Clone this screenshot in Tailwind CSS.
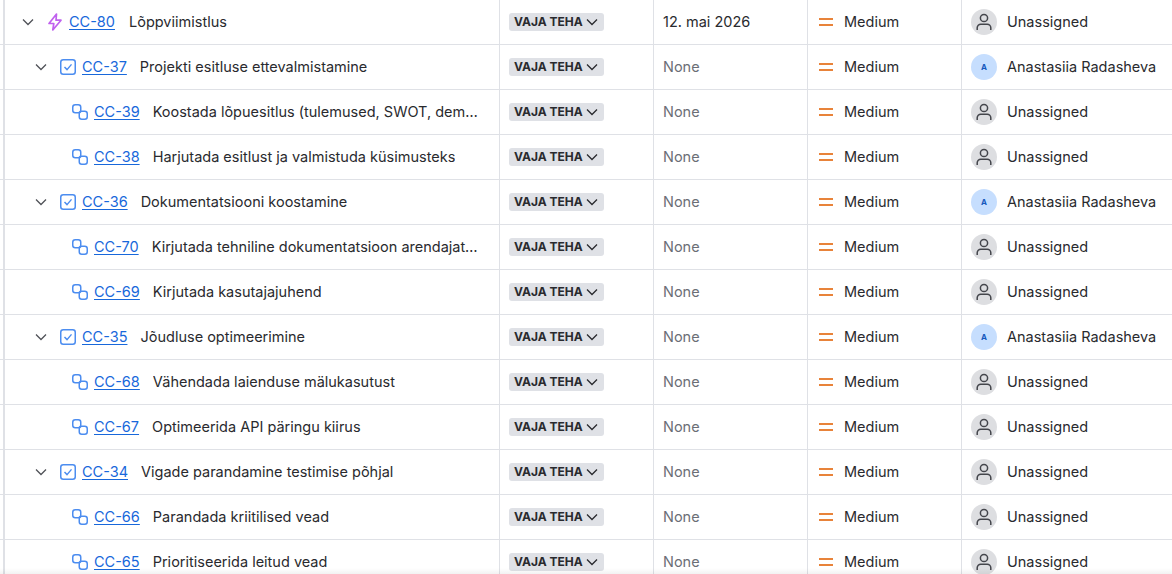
<!doctype html>
<html><head><meta charset="utf-8"><script src="https://cdn.jsdelivr.net/npm/@tailwindcss/browser@4"></script></head>
<body class="bg-white">
<svg class="hidden" width="0" height="0">
<defs>
<symbol id="chev" viewBox="0 0 12 12"><path d="M1 3.5 6 8.5 11 3.5" fill="none" stroke="currentColor" stroke-width="1.3"/></symbol>
<symbol id="bolt" viewBox="0 0 16 18"><path d="M9.5 1 2 10.5h4.8L5.8 17 14 7.2H9z" fill="none" stroke="#c061ee" stroke-width="1.7" stroke-linejoin="round"/></symbol>
<symbol id="task" viewBox="0 0 16 16"><rect x=".75" y=".75" width="14.5" height="14.5" rx="2.5" fill="none" stroke="#4c8df0" stroke-width="1.5"/><path d="M4.5 8 7 10.6 11.5 5.4" fill="none" stroke="#4c8df0" stroke-width="1.4"/></symbol>
<symbol id="sub" viewBox="0 0 16 16"><rect x=".75" y=".75" width="8" height="8" rx="2.5" fill="none" stroke="#4c8df0" stroke-width="1.5"/><rect x="7.25" y="7.25" width="8" height="8" rx="2.5" fill="none" stroke="#4c8df0" stroke-width="1.5"/></symbol>
<symbol id="prio" viewBox="0 0 14 8"><path d="M0 1h14M0 7h14" stroke="#e8833a" stroke-width="2"/></symbol>
<symbol id="user" viewBox="0 0 16 18"><circle cx="8" cy="5" r="3.6" fill="none" stroke="#44464c" stroke-width="1.5"/><path d="M1.2 17v-2.2a3.6 3.6 0 0 1 3.6-3.6h6.4a3.6 3.6 0 0 1 3.6 3.6V17" fill="none" stroke="#44464c" stroke-width="1.5"/></symbol>
</defs>
</svg>
<main class="relative h-[574px] w-[1172px] overflow-hidden font-['Inter',sans-serif] text-[14.5px] text-[#292a2e]">

<div class="flex h-[45px] border-b border-[#dfe1e6]"><div class="w-[5px] border-r-2 border-[#dfe1e6]"></div><div class="flex w-[495px] min-w-0 items-center border-r border-[#dfe1e6] pl-[17px] pr-[21px]"><svg class="mr-[13px] h-3 w-3 shrink-0 text-[#505258]"><use href="#chev"/></svg><svg class="mr-[6px] h-[18px] w-[16px] shrink-0"><use href="#bolt"/></svg><a class="mr-[14px] shrink-0 text-[#1868db] underline underline-offset-2">CC-80</a><span class="truncate">Lõppviimistlus</span></div><div class="flex w-[154px] items-center border-r border-[#dfe1e6] pl-[9px]"><span class="flex h-[18px] w-[95px] items-center rounded-[3px] bg-[#dfe1e6] pl-[5px] text-[12px] font-bold">VAJA TEHA<svg class="ml-[3px] h-3 w-3 text-[#292a2e]"><use href="#chev"/></svg></span></div><div class="flex w-[154px] items-center border-r border-[#dfe1e6] pl-[9px]">12. mai 2026</div><div class="flex w-[154px] items-center border-r border-[#dfe1e6] pl-[11px]"><svg class="mr-[11px] h-2 w-[14px]"><use href="#prio"/></svg>Medium</div><div class="flex flex-1 items-center whitespace-nowrap pl-[9px]"><span class="mr-[10px] flex h-[26px] w-[26px] shrink-0 items-center justify-center rounded-full bg-[#dddee1]"><svg class="h-[18px] w-4"><use href="#user"/></svg></span>Unassigned</div></div>

<div class="flex h-[45px] border-b border-[#dfe1e6]"><div class="w-[5px] border-r-2 border-[#dfe1e6]"></div><div class="flex w-[495px] min-w-0 items-center border-r border-[#dfe1e6] pl-[30px] pr-[21px]"><svg class="mr-[13px] h-3 w-3 shrink-0 text-[#505258]"><use href="#chev"/></svg><svg class="mr-[6px] h-4 w-4 shrink-0"><use href="#task"/></svg><a class="mr-[13px] shrink-0 text-[#1868db] underline underline-offset-2">CC-37</a><span class="truncate">Projekti esitluse ettevalmistamine</span></div><div class="flex w-[154px] items-center border-r border-[#dfe1e6] pl-[9px]"><span class="flex h-[18px] w-[95px] items-center rounded-[3px] bg-[#dfe1e6] pl-[5px] text-[12px] font-bold">VAJA TEHA<svg class="ml-[3px] h-3 w-3 text-[#292a2e]"><use href="#chev"/></svg></span></div><div class="flex w-[154px] items-center border-r border-[#dfe1e6] pl-[9px] text-[#6b6e76]">None</div><div class="flex w-[154px] items-center border-r border-[#dfe1e6] pl-[11px]"><svg class="mr-[11px] h-2 w-[14px]"><use href="#prio"/></svg>Medium</div><div class="flex flex-1 items-center whitespace-nowrap pl-[9px]"><span class="mr-[10px] flex h-[26px] w-[26px] shrink-0 items-center justify-center rounded-full bg-[#c6defe] text-[8px] font-bold text-[#1558bc]">A</span>Anastasiia Radasheva</div></div>

<div class="flex h-[45px] border-b border-[#dfe1e6]"><div class="w-[5px] border-r-2 border-[#dfe1e6]"></div><div class="flex w-[495px] min-w-0 items-center border-r border-[#dfe1e6] pl-[67px] pr-[21px]"><svg class="mr-[6px] h-4 w-4 shrink-0"><use href="#sub"/></svg><a class="mr-[13px] shrink-0 text-[#1868db] underline underline-offset-2">CC-39</a><span class="truncate">Koostada lõpuesitlus (tulemused, SWOT, demo ja järeldused)</span></div><div class="flex w-[154px] items-center border-r border-[#dfe1e6] pl-[9px]"><span class="flex h-[18px] w-[95px] items-center rounded-[3px] bg-[#dfe1e6] pl-[5px] text-[12px] font-bold">VAJA TEHA<svg class="ml-[3px] h-3 w-3 text-[#292a2e]"><use href="#chev"/></svg></span></div><div class="flex w-[154px] items-center border-r border-[#dfe1e6] pl-[9px] text-[#6b6e76]">None</div><div class="flex w-[154px] items-center border-r border-[#dfe1e6] pl-[11px]"><svg class="mr-[11px] h-2 w-[14px]"><use href="#prio"/></svg>Medium</div><div class="flex flex-1 items-center whitespace-nowrap pl-[9px]"><span class="mr-[10px] flex h-[26px] w-[26px] shrink-0 items-center justify-center rounded-full bg-[#dddee1]"><svg class="h-[18px] w-4"><use href="#user"/></svg></span>Unassigned</div></div>

<div class="flex h-[45px] border-b border-[#dfe1e6]"><div class="w-[5px] border-r-2 border-[#dfe1e6]"></div><div class="flex w-[495px] min-w-0 items-center border-r border-[#dfe1e6] pl-[67px] pr-[21px]"><svg class="mr-[6px] h-4 w-4 shrink-0"><use href="#sub"/></svg><a class="mr-[13px] shrink-0 text-[#1868db] underline underline-offset-2">CC-38</a><span class="truncate">Harjutada esitlust ja valmistuda küsimusteks</span></div><div class="flex w-[154px] items-center border-r border-[#dfe1e6] pl-[9px]"><span class="flex h-[18px] w-[95px] items-center rounded-[3px] bg-[#dfe1e6] pl-[5px] text-[12px] font-bold">VAJA TEHA<svg class="ml-[3px] h-3 w-3 text-[#292a2e]"><use href="#chev"/></svg></span></div><div class="flex w-[154px] items-center border-r border-[#dfe1e6] pl-[9px] text-[#6b6e76]">None</div><div class="flex w-[154px] items-center border-r border-[#dfe1e6] pl-[11px]"><svg class="mr-[11px] h-2 w-[14px]"><use href="#prio"/></svg>Medium</div><div class="flex flex-1 items-center whitespace-nowrap pl-[9px]"><span class="mr-[10px] flex h-[26px] w-[26px] shrink-0 items-center justify-center rounded-full bg-[#dddee1]"><svg class="h-[18px] w-4"><use href="#user"/></svg></span>Unassigned</div></div>

<div class="flex h-[45px] border-b border-[#dfe1e6]"><div class="w-[5px] border-r-2 border-[#dfe1e6]"></div><div class="flex w-[495px] min-w-0 items-center border-r border-[#dfe1e6] pl-[30px] pr-[21px]"><svg class="mr-[13px] h-3 w-3 shrink-0 text-[#505258]"><use href="#chev"/></svg><svg class="mr-[6px] h-4 w-4 shrink-0"><use href="#task"/></svg><a class="mr-[13px] shrink-0 text-[#1868db] underline underline-offset-2">CC-36</a><span class="truncate">Dokumentatsiooni koostamine</span></div><div class="flex w-[154px] items-center border-r border-[#dfe1e6] pl-[9px]"><span class="flex h-[18px] w-[95px] items-center rounded-[3px] bg-[#dfe1e6] pl-[5px] text-[12px] font-bold">VAJA TEHA<svg class="ml-[3px] h-3 w-3 text-[#292a2e]"><use href="#chev"/></svg></span></div><div class="flex w-[154px] items-center border-r border-[#dfe1e6] pl-[9px] text-[#6b6e76]">None</div><div class="flex w-[154px] items-center border-r border-[#dfe1e6] pl-[11px]"><svg class="mr-[11px] h-2 w-[14px]"><use href="#prio"/></svg>Medium</div><div class="flex flex-1 items-center whitespace-nowrap pl-[9px]"><span class="mr-[10px] flex h-[26px] w-[26px] shrink-0 items-center justify-center rounded-full bg-[#c6defe] text-[8px] font-bold text-[#1558bc]">A</span>Anastasiia Radasheva</div></div>

<div class="flex h-[45px] border-b border-[#dfe1e6]"><div class="w-[5px] border-r-2 border-[#dfe1e6]"></div><div class="flex w-[495px] min-w-0 items-center border-r border-[#dfe1e6] pl-[67px] pr-[21px]"><svg class="mr-[6px] h-4 w-4 shrink-0"><use href="#sub"/></svg><a class="mr-[13px] shrink-0 text-[#1868db] underline underline-offset-2">CC-70</a><span class="truncate">Kirjutada tehniline dokumentatsioon arendajatele ja kasutajatele</span></div><div class="flex w-[154px] items-center border-r border-[#dfe1e6] pl-[9px]"><span class="flex h-[18px] w-[95px] items-center rounded-[3px] bg-[#dfe1e6] pl-[5px] text-[12px] font-bold">VAJA TEHA<svg class="ml-[3px] h-3 w-3 text-[#292a2e]"><use href="#chev"/></svg></span></div><div class="flex w-[154px] items-center border-r border-[#dfe1e6] pl-[9px] text-[#6b6e76]">None</div><div class="flex w-[154px] items-center border-r border-[#dfe1e6] pl-[11px]"><svg class="mr-[11px] h-2 w-[14px]"><use href="#prio"/></svg>Medium</div><div class="flex flex-1 items-center whitespace-nowrap pl-[9px]"><span class="mr-[10px] flex h-[26px] w-[26px] shrink-0 items-center justify-center rounded-full bg-[#dddee1]"><svg class="h-[18px] w-4"><use href="#user"/></svg></span>Unassigned</div></div>

<div class="flex h-[45px] border-b border-[#dfe1e6]"><div class="w-[5px] border-r-2 border-[#dfe1e6]"></div><div class="flex w-[495px] min-w-0 items-center border-r border-[#dfe1e6] pl-[67px] pr-[21px]"><svg class="mr-[6px] h-4 w-4 shrink-0"><use href="#sub"/></svg><a class="mr-[13px] shrink-0 text-[#1868db] underline underline-offset-2">CC-69</a><span class="truncate">Kirjutada kasutajajuhend</span></div><div class="flex w-[154px] items-center border-r border-[#dfe1e6] pl-[9px]"><span class="flex h-[18px] w-[95px] items-center rounded-[3px] bg-[#dfe1e6] pl-[5px] text-[12px] font-bold">VAJA TEHA<svg class="ml-[3px] h-3 w-3 text-[#292a2e]"><use href="#chev"/></svg></span></div><div class="flex w-[154px] items-center border-r border-[#dfe1e6] pl-[9px] text-[#6b6e76]">None</div><div class="flex w-[154px] items-center border-r border-[#dfe1e6] pl-[11px]"><svg class="mr-[11px] h-2 w-[14px]"><use href="#prio"/></svg>Medium</div><div class="flex flex-1 items-center whitespace-nowrap pl-[9px]"><span class="mr-[10px] flex h-[26px] w-[26px] shrink-0 items-center justify-center rounded-full bg-[#dddee1]"><svg class="h-[18px] w-4"><use href="#user"/></svg></span>Unassigned</div></div>

<div class="flex h-[45px] border-b border-[#dfe1e6]"><div class="w-[5px] border-r-2 border-[#dfe1e6]"></div><div class="flex w-[495px] min-w-0 items-center border-r border-[#dfe1e6] pl-[30px] pr-[21px]"><svg class="mr-[13px] h-3 w-3 shrink-0 text-[#505258]"><use href="#chev"/></svg><svg class="mr-[6px] h-4 w-4 shrink-0"><use href="#task"/></svg><a class="mr-[13px] shrink-0 text-[#1868db] underline underline-offset-2">CC-35</a><span class="truncate">Jõudluse optimeerimine</span></div><div class="flex w-[154px] items-center border-r border-[#dfe1e6] pl-[9px]"><span class="flex h-[18px] w-[95px] items-center rounded-[3px] bg-[#dfe1e6] pl-[5px] text-[12px] font-bold">VAJA TEHA<svg class="ml-[3px] h-3 w-3 text-[#292a2e]"><use href="#chev"/></svg></span></div><div class="flex w-[154px] items-center border-r border-[#dfe1e6] pl-[9px] text-[#6b6e76]">None</div><div class="flex w-[154px] items-center border-r border-[#dfe1e6] pl-[11px]"><svg class="mr-[11px] h-2 w-[14px]"><use href="#prio"/></svg>Medium</div><div class="flex flex-1 items-center whitespace-nowrap pl-[9px]"><span class="mr-[10px] flex h-[26px] w-[26px] shrink-0 items-center justify-center rounded-full bg-[#c6defe] text-[8px] font-bold text-[#1558bc]">A</span>Anastasiia Radasheva</div></div>

<div class="flex h-[45px] border-b border-[#dfe1e6]"><div class="w-[5px] border-r-2 border-[#dfe1e6]"></div><div class="flex w-[495px] min-w-0 items-center border-r border-[#dfe1e6] pl-[67px] pr-[21px]"><svg class="mr-[6px] h-4 w-4 shrink-0"><use href="#sub"/></svg><a class="mr-[13px] shrink-0 text-[#1868db] underline underline-offset-2">CC-68</a><span class="truncate">Vähendada laienduse mälukasutust</span></div><div class="flex w-[154px] items-center border-r border-[#dfe1e6] pl-[9px]"><span class="flex h-[18px] w-[95px] items-center rounded-[3px] bg-[#dfe1e6] pl-[5px] text-[12px] font-bold">VAJA TEHA<svg class="ml-[3px] h-3 w-3 text-[#292a2e]"><use href="#chev"/></svg></span></div><div class="flex w-[154px] items-center border-r border-[#dfe1e6] pl-[9px] text-[#6b6e76]">None</div><div class="flex w-[154px] items-center border-r border-[#dfe1e6] pl-[11px]"><svg class="mr-[11px] h-2 w-[14px]"><use href="#prio"/></svg>Medium</div><div class="flex flex-1 items-center whitespace-nowrap pl-[9px]"><span class="mr-[10px] flex h-[26px] w-[26px] shrink-0 items-center justify-center rounded-full bg-[#dddee1]"><svg class="h-[18px] w-4"><use href="#user"/></svg></span>Unassigned</div></div>

<div class="flex h-[45px] border-b border-[#dfe1e6]"><div class="w-[5px] border-r-2 border-[#dfe1e6]"></div><div class="flex w-[495px] min-w-0 items-center border-r border-[#dfe1e6] pl-[67px] pr-[21px]"><svg class="mr-[6px] h-4 w-4 shrink-0"><use href="#sub"/></svg><a class="mr-[13px] shrink-0 text-[#1868db] underline underline-offset-2">CC-67</a><span class="truncate">Optimeerida API päringu kiirus</span></div><div class="flex w-[154px] items-center border-r border-[#dfe1e6] pl-[9px]"><span class="flex h-[18px] w-[95px] items-center rounded-[3px] bg-[#dfe1e6] pl-[5px] text-[12px] font-bold">VAJA TEHA<svg class="ml-[3px] h-3 w-3 text-[#292a2e]"><use href="#chev"/></svg></span></div><div class="flex w-[154px] items-center border-r border-[#dfe1e6] pl-[9px] text-[#6b6e76]">None</div><div class="flex w-[154px] items-center border-r border-[#dfe1e6] pl-[11px]"><svg class="mr-[11px] h-2 w-[14px]"><use href="#prio"/></svg>Medium</div><div class="flex flex-1 items-center whitespace-nowrap pl-[9px]"><span class="mr-[10px] flex h-[26px] w-[26px] shrink-0 items-center justify-center rounded-full bg-[#dddee1]"><svg class="h-[18px] w-4"><use href="#user"/></svg></span>Unassigned</div></div>

<div class="flex h-[45px] border-b border-[#dfe1e6]"><div class="w-[5px] border-r-2 border-[#dfe1e6]"></div><div class="flex w-[495px] min-w-0 items-center border-r border-[#dfe1e6] pl-[30px] pr-[21px]"><svg class="mr-[13px] h-3 w-3 shrink-0 text-[#505258]"><use href="#chev"/></svg><svg class="mr-[6px] h-4 w-4 shrink-0"><use href="#task"/></svg><a class="mr-[13px] shrink-0 text-[#1868db] underline underline-offset-2">CC-34</a><span class="truncate">Vigade parandamine testimise põhjal</span></div><div class="flex w-[154px] items-center border-r border-[#dfe1e6] pl-[9px]"><span class="flex h-[18px] w-[95px] items-center rounded-[3px] bg-[#dfe1e6] pl-[5px] text-[12px] font-bold">VAJA TEHA<svg class="ml-[3px] h-3 w-3 text-[#292a2e]"><use href="#chev"/></svg></span></div><div class="flex w-[154px] items-center border-r border-[#dfe1e6] pl-[9px] text-[#6b6e76]">None</div><div class="flex w-[154px] items-center border-r border-[#dfe1e6] pl-[11px]"><svg class="mr-[11px] h-2 w-[14px]"><use href="#prio"/></svg>Medium</div><div class="flex flex-1 items-center whitespace-nowrap pl-[9px]"><span class="mr-[10px] flex h-[26px] w-[26px] shrink-0 items-center justify-center rounded-full bg-[#dddee1]"><svg class="h-[18px] w-4"><use href="#user"/></svg></span>Unassigned</div></div>

<div class="flex h-[45px] border-b border-[#dfe1e6]"><div class="w-[5px] border-r-2 border-[#dfe1e6]"></div><div class="flex w-[495px] min-w-0 items-center border-r border-[#dfe1e6] pl-[67px] pr-[21px]"><svg class="mr-[6px] h-4 w-4 shrink-0"><use href="#sub"/></svg><a class="mr-[13px] shrink-0 text-[#1868db] underline underline-offset-2">CC-66</a><span class="truncate">Parandada kriitilised vead</span></div><div class="flex w-[154px] items-center border-r border-[#dfe1e6] pl-[9px]"><span class="flex h-[18px] w-[95px] items-center rounded-[3px] bg-[#dfe1e6] pl-[5px] text-[12px] font-bold">VAJA TEHA<svg class="ml-[3px] h-3 w-3 text-[#292a2e]"><use href="#chev"/></svg></span></div><div class="flex w-[154px] items-center border-r border-[#dfe1e6] pl-[9px] text-[#6b6e76]">None</div><div class="flex w-[154px] items-center border-r border-[#dfe1e6] pl-[11px]"><svg class="mr-[11px] h-2 w-[14px]"><use href="#prio"/></svg>Medium</div><div class="flex flex-1 items-center whitespace-nowrap pl-[9px]"><span class="mr-[10px] flex h-[26px] w-[26px] shrink-0 items-center justify-center rounded-full bg-[#dddee1]"><svg class="h-[18px] w-4"><use href="#user"/></svg></span>Unassigned</div></div>

<div class="flex h-[45px] border-b border-[#dfe1e6]"><div class="w-[5px] border-r-2 border-[#dfe1e6]"></div><div class="flex w-[495px] min-w-0 items-center border-r border-[#dfe1e6] pl-[67px] pr-[21px]"><svg class="mr-[6px] h-4 w-4 shrink-0"><use href="#sub"/></svg><a class="mr-[13px] shrink-0 text-[#1868db] underline underline-offset-2">CC-65</a><span class="truncate">Prioritiseerida leitud vead</span></div><div class="flex w-[154px] items-center border-r border-[#dfe1e6] pl-[9px]"><span class="flex h-[18px] w-[95px] items-center rounded-[3px] bg-[#dfe1e6] pl-[5px] text-[12px] font-bold">VAJA TEHA<svg class="ml-[3px] h-3 w-3 text-[#292a2e]"><use href="#chev"/></svg></span></div><div class="flex w-[154px] items-center border-r border-[#dfe1e6] pl-[9px] text-[#6b6e76]">None</div><div class="flex w-[154px] items-center border-r border-[#dfe1e6] pl-[11px]"><svg class="mr-[11px] h-2 w-[14px]"><use href="#prio"/></svg>Medium</div><div class="flex flex-1 items-center whitespace-nowrap pl-[9px]"><span class="mr-[10px] flex h-[26px] w-[26px] shrink-0 items-center justify-center rounded-full bg-[#dddee1]"><svg class="h-[18px] w-4"><use href="#user"/></svg></span>Unassigned</div></div>

<div class="absolute inset-x-0 bottom-0 h-[6px] bg-gradient-to-b from-transparent to-[#0000000d]"></div>
</main>
</body></html>
